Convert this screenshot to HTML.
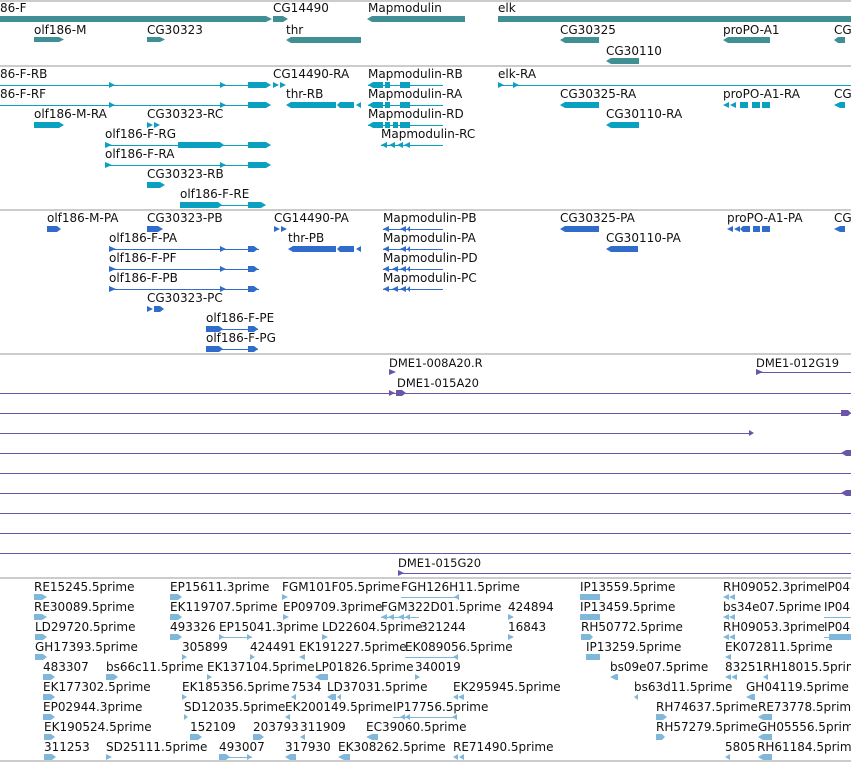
<!DOCTYPE html>
<html><head><meta charset="utf-8"><style>
body{margin:0;background:#fff;width:851px;height:762px;overflow:hidden}
svg{display:block}
text{font-family:"DejaVu Sans","Liberation Sans",sans-serif;font-size:12px;fill:#111}
.s{font-size:11.5px}
</style></head><body>
<svg width="851" height="762" viewBox="0 0 851 762">
<g stroke="#bbb" stroke-width="1.5"><line x1="0" y1="1" x2="851" y2="1"/><line x1="0" y1="66" x2="851" y2="66"/><line x1="0" y1="210" x2="851" y2="210"/><line x1="0" y1="354" x2="851" y2="354"/><line x1="0" y1="578" x2="851" y2="578"/><line x1="0" y1="761" x2="851" y2="761"/></g>

<!-- Track 1 genes -->
<g fill="#3f8f94">
<polygon points="0,16 266,16 272,19 266,22 0,22"/>
<polygon points="273,16 283,16 288,19 283,22 273,22"/>
<polygon points="372,16 465,16 465,22 372,22 367,19"/>
<rect x="498" y="16" width="353" height="6"/>
<polygon points="34,37 59,37 64,39.5 59,42 34,42"/>
<polygon points="147,37 160,37 165,39.5 160,42 147,42"/>
<polygon points="291,37 361,37 361,43 291,43 286,40"/>
<polygon points="565,37 599,37 599,43 565,43 560,40"/>
<polygon points="728,37 770,37 770,43 728,43 723,40"/>
<polygon points="838,37 845,37 845,43 838,43 834,40"/>
<polygon points="611,58 639,58 639,64 611,64 606,61"/>
</g>
<text x="0" y="12">86-F</text><text x="273" y="12">CG14490</text><text x="368" y="12">Mapmodulin</text><text x="498" y="12">elk</text>
<text x="34" y="34">olf186-M</text><text x="147" y="34">CG30323</text><text x="286" y="34">thr</text><text x="560" y="34">CG30325</text><text x="723" y="34">proPO-A1</text><text x="834" y="34">CG</text>
<text x="606" y="55">CG30110</text>

<!-- Track 2 transcripts -->
<g fill="#0aa0c0" stroke="none">
<rect x="0" y="85" width="270" height="1"/><polygon points="109,82 115,85 109,88"/><polygon points="220,82 226,85 220,88"/><polygon points="248,82 266,82 271,85 266,88 248,88"/>
<polygon points="273,82 279,85 273,88"/><polygon points="280,82 286,85 280,88"/>
<rect x="368" y="85" width="75" height="1"/><polygon points="373,82 383,82 383,88 373,88 368,85"/><polygon points="385,82 390,82 390,88 385,88"/><polygon points="400,82 410,82 410,88 400,88"/>
<rect x="498" y="85" width="353" height="1"/><polygon points="498,82 504,85 498,88"/><polygon points="513,82 519,85 513,88"/>
<rect x="0" y="105" width="270" height="1"/><polygon points="109,102 115,105 109,108"/><polygon points="220,102 226,105 220,108"/><polygon points="248,102 266,102 271,105 266,108 248,108"/>
<polygon points="291,102 336,102 336,108 291,108 286,105"/><polygon points="340,102 354,102 354,108 340,108 337,105"/><polygon points="356,105 361,102 361,108"/>
<rect x="368" y="105" width="75" height="1"/><polygon points="373,102 383,102 383,108 373,108 368,105"/><polygon points="385,102 390,102 390,108 385,108"/><polygon points="400,102 410,102 410,108 400,108"/>
<polygon points="565,102 599,102 599,108 565,108 560,105"/>
<polygon points="723,105 729,102 729,108"/><polygon points="730,105 736,102 736,108"/><polygon points="740,102 748,102 748,108 740,108"/><polygon points="752,102 760,102 760,108 752,108"/><polygon points="762,102 770,102 770,108 762,108"/>
<polygon points="834,105 840,102 845,102 845,108 840,108"/>
<polygon points="34,122 59,122 64,125 59,128 34,128"/>
<polygon points="147,122 153,125 147,128"/><polygon points="154,122 160,125 154,128"/>
<rect x="368" y="125" width="75" height="1"/><polygon points="373,122 383,122 383,128 373,128 368,125"/><polygon points="385,122 390,122 390,128 385,128"/><polygon points="393,122 398,122 398,128 393,128"/><polygon points="400,122 410,122 410,128 400,128"/>
<polygon points="611,122 639,122 639,128 611,128 606,125"/>
<rect x="105" y="145" width="165" height="1"/><polygon points="105,142 112,145 105,148"/><polygon points="178,142 220,142 224,145 220,148 178,148"/><polygon points="248,142 266,142 271,145 266,148 248,148"/>
<rect x="381" y="145" width="62" height="1"/><polygon points="381,145 387,142 387,148"/><polygon points="389,145 395,142 395,148"/><polygon points="397,145 403,142 403,148"/><polygon points="404,145 410,142 410,148"/>
<rect x="105" y="165" width="165" height="1"/><polygon points="105,162 112,165 105,168"/><polygon points="220,162 226,165 220,168"/><polygon points="248,162 266,162 271,165 266,168 248,168"/>
<polygon points="147,182 160,182 165,185 160,188 147,188"/>
<rect x="180" y="205" width="85" height="1"/><polygon points="180,202 218,202 222,205 218,208 180,208"/><polygon points="248,202 261,202 266,205 261,208 248,208"/>
</g>
<text x="0" y="78">86-F-RB</text><text x="273" y="78">CG14490-RA</text><text x="368" y="78">Mapmodulin-RB</text><text x="498" y="78">elk-RA</text>
<text x="0" y="98">86-F-RF</text><text x="286" y="98">thr-RB</text><text x="368" y="98">Mapmodulin-RA</text><text x="560" y="98">CG30325-RA</text><text x="723" y="98">proPO-A1-RA</text><text x="834" y="98">CG</text>
<text x="34" y="118">olf186-M-RA</text><text x="147" y="118">CG30323-RC</text><text x="368" y="118">Mapmodulin-RD</text><text x="606" y="118">CG30110-RA</text>
<text x="105" y="138">olf186-F-RG</text><text x="381" y="138">Mapmodulin-RC</text>
<text x="105" y="158">olf186-F-RA</text>
<text x="147" y="178">CG30323-RB</text>
<text x="180" y="198">olf186-F-RE</text>

<!-- Track 3 -->
<g fill="#306ccc">
<polygon points="47,226 57,226 61,229 57,232 47,232"/>
<polygon points="147,226 158,226 163,229 158,232 147,232"/>
<polygon points="274,226 280,229 274,232"/><polygon points="281,226 287,229 281,232"/>
<rect x="383" y="229" width="60" height="1"/><polygon points="383,229 389,226 389,232"/><polygon points="400,229 406,226 406,232"/><polygon points="407,229 410,226 410,232"/>
<polygon points="565,226 599,226 599,232 565,232 560,229"/>
<polygon points="727,229 733,226 733,232"/><polygon points="734,229 740,226 740,232"/><polygon points="743,226 750,226 750,232 743,232 740,229"/><polygon points="753,226 760,226 760,232 753,232"/><polygon points="762,226 770,226 770,232 762,232"/>
<polygon points="834,229 840,226 845,226 845,232 840,232"/>
<rect x="109" y="249" width="150" height="1"/><polygon points="109,246 116,249 109,252"/><polygon points="220,246 226,249 220,252"/><polygon points="248,246 254,246 258,249 254,252 248,252"/>
<polygon points="293,246 336,246 336,252 293,252 288,249"/><polygon points="340,246 354,246 354,252 340,252 337,249"/><polygon points="356,249 361,246 361,252"/>
<rect x="383" y="249" width="60" height="1"/><polygon points="383,249 389,246 389,252"/><polygon points="400,249 406,246 406,252"/><polygon points="407,249 410,246 410,252"/>
<polygon points="611,246 638,246 638,252 611,252 606,249"/>
<rect x="109" y="269" width="150" height="1"/><polygon points="109,266 116,269 109,272"/><polygon points="220,266 226,269 220,272"/><polygon points="248,266 254,266 258,269 254,272 248,272"/>
<rect x="383" y="269" width="60" height="1"/><polygon points="383,269 389,266 389,272"/><polygon points="392,269 398,266 398,272"/><polygon points="400,269 406,266 406,272"/><polygon points="407,269 410,266 410,272"/>
<rect x="109" y="289" width="150" height="1"/><polygon points="109,286 116,289 109,292"/><polygon points="220,286 226,289 220,292"/><polygon points="248,286 254,286 258,289 254,292 248,292"/>
<rect x="383" y="289" width="60" height="1"/><polygon points="383,289 389,286 389,292"/><polygon points="392,289 398,286 398,292"/><polygon points="400,289 406,286 406,292"/><polygon points="407,289 410,286 410,292"/>
<polygon points="147,306 153,309 147,312"/><polygon points="154,306 160,306 164,309 160,312 154,312"/>
<rect x="206" y="329" width="52" height="1"/><polygon points="206,326 219,326 223,329 219,332 206,332"/><polygon points="248,326 254,326 258,329 254,332 248,332"/>
<rect x="206" y="349" width="52" height="1"/><polygon points="206,346 219,346 223,349 219,352 206,352"/><polygon points="248,346 254,346 258,349 254,352 248,352"/>
</g>
<text x="47" y="222">olf186-M-PA</text><text x="147" y="222">CG30323-PB</text><text x="274" y="222">CG14490-PA</text><text x="383" y="222">Mapmodulin-PB</text><text x="560" y="222">CG30325-PA</text><text x="727" y="222">proPO-A1-PA</text><text x="834" y="222">CG</text>
<text x="109" y="242">olf186-F-PA</text><text x="288" y="242">thr-PB</text><text x="383" y="242">Mapmodulin-PA</text><text x="606" y="242">CG30110-PA</text>
<text x="109" y="262">olf186-F-PF</text><text x="383" y="262">Mapmodulin-PD</text>
<text x="109" y="282">olf186-F-PB</text><text x="383" y="282">Mapmodulin-PC</text>
<text x="147" y="302">CG30323-PC</text>
<text x="206" y="322">olf186-F-PE</text>
<text x="206" y="342">olf186-F-PG</text>

<!-- Track 4 -->
<g fill="#6a55a8">
<polygon points="389,369 396,372 389,375"/>
<rect x="756" y="372" width="95" height="1"/><polygon points="756,369 763,372 756,375"/>
<rect x="0" y="393" width="851" height="1"/><polygon points="389,390 395,393 389,396"/><polygon points="396,390 402,390 406,393 402,396 396,396"/>
<rect x="0" y="413" width="851" height="1"/><polygon points="841,410 848,410 851,413 848,416 841,416"/>
<rect x="0" y="433" width="750" height="1"/><polygon points="749,430 754,433 749,436"/>
<rect x="0" y="453" width="851" height="1"/><polygon points="841,453 846,450 851,450 851,456 846,456"/>
<rect x="0" y="473" width="851" height="1"/>
<rect x="0" y="493" width="851" height="1"/><polygon points="841,493 846,490 851,490 851,496 846,496"/>
<rect x="0" y="513" width="851" height="1"/>
<rect x="0" y="533" width="851" height="1"/>
<rect x="0" y="553" width="851" height="1"/>
<rect x="398" y="573" width="453" height="1"/><polygon points="398,570 404,573 398,576"/>
</g>
<text class="s" x="389" y="367">DME1-008A20.R</text><text class="s" x="756" y="367">DME1-012G19</text>
<text class="s" x="397" y="387">DME1-015A20</text><text class="s" x="398" y="567">DME1-015G20</text>

<!-- Track 5 -->
<g fill="#80b8dc">
<polygon points="34,594 42,594 47,597 42,600 34,600"/><polygon points="170,594 178,594 182,597 178,600 170,600"/><polygon points="282,594 288,597 282,600"/><rect x="401" y="597" width="58" height="1"/><polygon points="454,597 459,594 459,600"/><rect x="580" y="594" width="20" height="6"/><polygon points="723,597 729,594 729,600"/><polygon points="729,597 735,594 735,600"/>
<polygon points="34,614 42,614 47,617 42,620 34,620"/><polygon points="170,614 178,614 182,617 178,620 170,620"/><polygon points="283,614 289,617 283,620"/><rect x="381" y="617" width="38" height="1"/><polygon points="381,617 387,614 387,620"/><polygon points="388,617 394,614 394,620"/><polygon points="398,617 404,614 404,620"/><polygon points="405,617 410,614 410,620"/><polygon points="508,614 514,617 508,620"/><rect x="580" y="614" width="20" height="6"/><polygon points="723,617 729,614 729,620"/><polygon points="729,617 735,614 735,620"/><rect x="824" y="617" width="27" height="1"/>
<polygon points="35,634 43,634 47,637 43,640 35,640"/><polygon points="170,634 178,634 182,637 178,640 170,640"/><rect x="219" y="637" width="33" height="1"/><polygon points="219,634 224,637 219,640"/><polygon points="247,634 252,637 247,640"/><polygon points="322,634 328,637 322,640"/><polygon points="508,634 514,637 508,640"/><polygon points="581,634 590,634 593,637 590,640 581,640"/><polygon points="723,637 729,634 729,640"/><polygon points="729,637 735,634 735,640"/><rect x="824" y="637" width="27" height="1"/><polygon points="829,634 851,634 851,640 829,640"/>
<polygon points="35,654 43,654 47,657 43,660 35,660"/><polygon points="182,654 187,657 182,660"/><polygon points="250,654 255,657 250,660"/><polygon points="299,657 305,654 305,660"/><rect x="405" y="657" width="53" height="1"/><polygon points="453,657 458,654 458,660"/><polygon points="586,654 600,654 600,660 586,660"/><polygon points="725,657 731,654 731,660"/>
<polygon points="43,674 51,674 55,677 51,680 43,680"/><polygon points="106,674 114,674 118,677 114,680 106,680"/><polygon points="207,674 212,677 207,680"/><polygon points="315,677 320,674 328,674 328,680 320,680"/><polygon points="415,674 420,677 415,680"/><polygon points="610,677 616,674 618,674 618,680 616,680"/><polygon points="725,677 731,674 731,680"/><polygon points="731,677 737,674 737,680"/><polygon points="763,677 768,674 768,680"/>
<polygon points="43,694 51,694 55,697 51,700 43,700"/><polygon points="182,694 187,697 182,700"/><polygon points="291,697 296,694 296,700"/><polygon points="327,697 332,694 336,694 336,700 332,700"/><polygon points="337,697 341,694 341,700"/><polygon points="453,697 458,694 458,700"/><polygon points="458,697 464,694 464,700"/><polygon points="634,697 638,694 638,700"/><polygon points="746,697 752,694 755,694 755,700 752,700"/>
<polygon points="43,714 51,714 55,717 51,720 43,720"/><polygon points="184,714 188,717 184,720"/><polygon points="285,717 290,714 290,720"/><rect x="393" y="717" width="64" height="1"/><polygon points="400,717 405,714 405,720"/><polygon points="405,717 410,714 410,720"/><polygon points="452,717 457,714 457,720"/><polygon points="656,714 663,714 667,717 663,720 656,720"/><polygon points="758,717 763,714 772,714 772,720 763,720"/>
<polygon points="44,734 51,734 55,737 51,740 44,740"/><polygon points="190,734 198,734 202,737 198,740 190,740"/><polygon points="253,734 260,734 264,737 260,740 253,740"/><polygon points="300,737 305,734 305,740"/><polygon points="366,737 372,734 378,734 378,740 372,740"/><polygon points="656,734 662,734 665,737 662,740 656,740"/><polygon points="758,737 763,734 772,734 772,740 763,740"/>
<polygon points="44,754 52,754 56,757 52,760 44,760"/><polygon points="106,754 112,757 106,760"/><rect x="219" y="757" width="33" height="1"/><polygon points="219,754 226,754 230,757 226,760 219,760"/><polygon points="247,754 252,757 247,760"/><polygon points="285,757 290,754 296,754 296,760 290,760"/><polygon points="338,757 344,754 350,754 350,760 344,760"/><polygon points="453,757 458,754 458,760"/><polygon points="459,757 464,754 464,760"/><polygon points="725,757 730,754 730,760"/><polygon points="758,757 763,754 772,754 772,760 763,760"/>
</g>
<g>
<text x="34" y="591">RE15245.5prime</text><text x="170" y="591">EP15611.3prime</text><text x="282" y="591">FGM101F05.5prime</text><text x="401" y="591">FGH126H11.5prime</text><text x="580" y="591">IP13559.5prime</text><text x="723" y="591">RH09052.3prime</text><text x="824" y="591">IP04</text>
<text x="34" y="611">RE30089.5prime</text><text x="170" y="611">EK119707.5prime</text><text x="283" y="611">EP09709.3prime</text><text x="381" y="611">FGM322D01.5prime</text><text x="508" y="611">424894</text><text x="580" y="611">IP13459.5prime</text><text x="723" y="611">bs34e07.5prime</text><text x="824" y="611">IP04</text>
<text x="35" y="631">LD29720.5prime</text><text x="170" y="631">493326</text><text x="219" y="631">EP15041.3prime</text><text x="322" y="631">LD22604.5prime</text><text x="420" y="631">321244</text><text x="508" y="631">16843</text><text x="581" y="631">RH50772.5prime</text><text x="723" y="631">RH09053.3prime</text><text x="824" y="631">IP04</text>
<text x="35" y="651">GH17393.5prime</text><text x="182" y="651">305899</text><text x="250" y="651">424491</text><text x="299" y="651">EK191227.5prime</text><text x="405" y="651">EK089056.5prime</text><text x="586" y="651">IP13259.5prime</text><text x="725" y="651">EK072811.5prime</text>
<text x="43" y="671">483307</text><text x="106" y="671">bs66c11.5prime</text><text x="207" y="671">EK137104.5prime</text><text x="315" y="671">LP01826.5prime</text><text x="415" y="671">340019</text><text x="610" y="671">bs09e07.5prime</text><text x="725" y="671">83251</text><text x="763" y="671">RH18015.5prime</text>
<text x="43" y="691">EK177302.5prime</text><text x="182" y="691">EK185356.5prime</text><text x="291" y="691">7534</text><text x="327" y="691">LD37031.5prime</text><text x="453" y="691">EK295945.5prime</text><text x="634" y="691">bs63d11.5prime</text><text x="746" y="691">GH04119.5prime</text>
<text x="43" y="711">EP02944.3prime</text><text x="184" y="711">SD12035.5prime</text><text x="285" y="711">EK200149.5prime</text><text x="393" y="711">IP17756.5prime</text><text x="656" y="711">RH74637.5prime</text><text x="758" y="711">RE73778.5prime</text>
<text x="44" y="731">EK190524.5prime</text><text x="190" y="731">152109</text><text x="253" y="731">203793</text><text x="300" y="731">311909</text><text x="366" y="731">EC39060.5prime</text><text x="656" y="731">RH57279.5prime</text><text x="758" y="731">GH05556.5prime</text>
<text x="44" y="751">311253</text><text x="106" y="751">SD25111.5prime</text><text x="219" y="751">493007</text><text x="285" y="751">317930</text><text x="338" y="751">EK308262.5prime</text><text x="453" y="751">RE71490.5prime</text><text x="725" y="751">5805</text><text x="757" y="751">RH61184.5prime</text>
</g>
</svg>
</body></html>
